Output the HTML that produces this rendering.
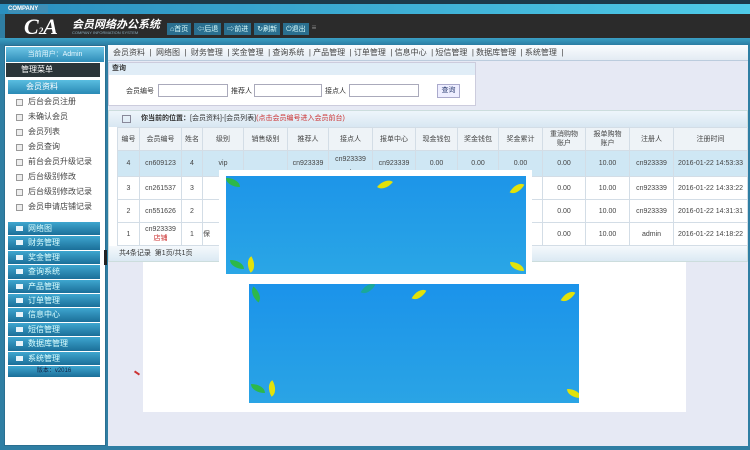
<!DOCTYPE html>
<html><head><meta charset="utf-8"><style>
*{margin:0;padding:0;box-sizing:border-box}
body{width:750px;height:450px;overflow:hidden;background:#2f7ea3;font-family:"Liberation Sans","Noto Sans CJK SC",sans-serif;font-size:8px;color:#333;position:relative}
.a{position:absolute}
table{border-collapse:collapse;table-layout:fixed}
td{border:1px solid #d3dde6;text-align:center;font-size:7px;color:#444;overflow:hidden;white-space:nowrap}
.lm div{height:15px;line-height:15px;padding-left:20px;color:#444;font-size:8px;position:relative}
.lm div:before{content:"";position:absolute;left:8px;top:5px;width:5px;height:5px;border:1px solid #999;background:#eee}
.bl div{height:13.4px;margin-bottom:1px;line-height:13px;padding-left:20px;color:#dff;font-size:8px;background:linear-gradient(#3ea6cf,#1b6f99);position:relative}
.bl div:before{content:"";position:absolute;left:8px;top:4px;width:7px;height:5px;background:#e8f4fa}
.leaf{position:absolute;width:14px;height:9px;border-radius:0 100% 0 100%}
</style></head><body>
<div class="a" style="left:0;top:0;width:750px;height:4px;background:#1c3a4a"></div>
<div class="a" style="left:0;top:4px;width:750px;height:10px;background:linear-gradient(90deg,#2a8fbf,#4fcbe8)"></div>
<div class="a" style="left:8px;top:5px;width:40px;height:8px;background:#3f8fb6;color:#fff;font-size:6px;line-height:8px;font-weight:bold">COMPANY</div>
<div class="a" style="left:5px;top:14px;width:745px;height:24px;background:#2b2b2b"></div>
<div class="a" style="left:24px;top:14px;font:italic bold 22px 'Liberation Serif',serif;color:#fff">C<span style="font-size:9px">2</span>A</div>
<div class="a" style="left:72px;top:16px;color:#fff;font-size:11px;font-weight:bold;font-style:italic">会员网络办公系统</div>
<div class="a" style="left:72px;top:30px;color:#8ab;font-size:4px">COMPANY INFORMATION SYSTEM</div>
<div class="a" style="left:167px;top:23px;display:flex;gap:3px">
<span style="background:#2a6f8f;color:#dff;font-size:7px;padding:1px 3px">⌂首页</span><span style="background:#2a6f8f;color:#dff;font-size:7px;padding:1px 3px">⇦后退</span><span style="background:#2a6f8f;color:#dff;font-size:7px;padding:1px 3px">⇨前进</span><span style="background:#2a6f8f;color:#dff;font-size:7px;padding:1px 3px">↻刷新</span><span style="background:#2a6f8f;color:#dff;font-size:7px;padding:1px 3px">⏻退出</span><span style="color:#888;font-size:8px">≡</span></div>
<div class="a" style="left:0;top:38px;width:750px;height:7px;background:linear-gradient(#3a9fc4,#2b7da3)"></div>
<!-- left -->
<div class="a" style="left:4px;top:45px;width:102px;height:401px;background:#fff;border:1px solid #2a6f91"></div>
<div class="a" style="left:6px;top:47px;width:98px;height:15px;background:linear-gradient(#6cc6e6,#2f8cb8);color:#e8f8ff;font-size:7px;line-height:15px;text-align:center">当前用户：Admin</div>
<div class="a" style="left:6px;top:63px;width:94px;height:14px;background:#2b3539;color:#fff;font-size:8px;line-height:14px;padding-left:15px">管理菜单</div>
<div class="a" style="left:8px;top:80px;width:92px;height:14px;background:linear-gradient(#59bde0,#2a8ab5);color:#fff;font-size:8px;line-height:14px;padding-left:18px">会员资料</div>
<div class="a lm" style="left:8px;top:94px;width:92px">
<div>后台会员注册</div><div>未确认会员</div><div>会员列表</div><div>会员查询</div><div>前台会员升级记录</div><div>后台级别修改</div><div>后台级别修改记录</div><div>会员申请店铺记录</div></div>
<div class="a bl" style="left:8px;top:222px;width:92px">
<div>网络图</div><div>财务管理</div><div>奖金管理</div><div>查询系统</div><div>产品管理</div><div>订单管理</div><div>信息中心</div><div>短信管理</div><div>数据库管理</div><div>系统管理</div></div>
<div class="a" style="left:8px;top:366px;width:92px;height:11px;background:linear-gradient(#3ea6cf,#1b6f99);color:#124;font-size:6px;text-align:center;line-height:11px">版本：v2016</div>
<div class="a" style="left:104px;top:250px;width:3px;height:15px;background:#222"></div>
<!-- right -->
<div class="a" style="left:108px;top:45px;width:640px;height:401px;background:#e6e9f4"></div>
<div class="a" style="left:108px;top:45px;width:640px;height:16px;background:linear-gradient(#fafcfe,#e3ebf3);border-bottom:1px solid #bcd;font-size:8px;line-height:16px;color:#444;padding-left:5px;word-spacing:0">会员资料 &nbsp;| &nbsp;网络图 &nbsp;| &nbsp;财务管理 &nbsp;| 奖金管理 &nbsp;| 查询系统 &nbsp;| 产品管理 &nbsp;| 订单管理 &nbsp;| 信息中心 &nbsp;| 短信管理 &nbsp;| 数据库管理 &nbsp;| 系统管理 &nbsp;|</div>
<div class="a" style="left:108px;top:62px;width:368px;height:44px;background:#fff;border:1px solid #ccd"></div>
<div class="a" style="left:109px;top:63px;width:366px;height:12px;background:#e0edf7;font-size:7px;font-weight:bold;padding-left:3px;line-height:12px">查询</div>
<div class="a" style="left:126px;top:86px;font-size:7px">会员编号</div>
<div class="a" style="left:158px;top:84px;width:70px;height:13px;border:1px solid #aab;background:#fff"></div>
<div class="a" style="left:231px;top:86px;font-size:7px">推荐人</div>
<div class="a" style="left:254px;top:84px;width:68px;height:13px;border:1px solid #aab;background:#fff"></div>
<div class="a" style="left:325px;top:86px;font-size:7px">接点人</div>
<div class="a" style="left:349px;top:84px;width:70px;height:13px;border:1px solid #aab;background:#fff"></div>
<div class="a" style="left:437px;top:84px;width:23px;height:14px;border:1px solid #aac;background:#eef;font-size:7px;text-align:center;line-height:12px;color:#347">查询</div>
<div class="a" style="left:108px;top:110px;width:640px;height:152px;background:#fff;border:1px solid #cdd"></div>
<div class="a" style="left:109px;top:111px;width:638px;height:16px;background:linear-gradient(#eef5fb,#d8e7f2);font-size:7px;line-height:16px;padding-left:32px"><b>你当前的位置：</b>[会员资料]-[会员列表]<span style="color:#c33">(点击会员编号进入会员前台)</span></div>
<div class="a" style="left:122px;top:115px;width:9px;height:8px;border:1px solid #889"></div>
<table class="a" style="left:117px;top:127px;width:631px">
<colgroup><col style="width:22px"><col style="width:42px"><col style="width:21px"><col style="width:41px"><col style="width:44px"><col style="width:41px"><col style="width:44px"><col style="width:43px"><col style="width:42px"><col style="width:41px"><col style="width:44px"><col style="width:43px"><col style="width:44px"><col style="width:44px"><col></colgroup>
<tr style="height:23px;background:#eef3f7"><td>编号</td><td>会员编号</td><td>姓名</td><td>级别</td><td>销售级别</td><td>推荐人</td><td>接点人</td><td>报单中心</td><td>现金钱包</td><td>奖金钱包</td><td>奖金累计</td><td style="white-space:normal;line-height:9px;padding:0 6px">重消购物账户</td><td style="white-space:normal;line-height:9px;padding:0 6px">报单购物账户</td><td>注册人</td><td>注册时间</td></tr>
<tr style="height:26px;background:#cfe7f4"><td>4</td><td>cn609123</td><td>4</td><td>vip</td><td></td><td>cn923339</td><td style="line-height:9px">cn923339<br>.</td><td>cn923339</td><td>0.00</td><td>0.00</td><td>0.00</td><td>0.00</td><td>10.00</td><td>cn923339</td><td>2016-01-22 14:53:33</td></tr>
<tr style="height:23px"><td>3</td><td>cn261537</td><td>3</td><td></td><td></td><td></td><td></td><td></td><td></td><td></td><td></td><td>0.00</td><td>10.00</td><td>cn923339</td><td>2016-01-22 14:33:22</td></tr>
<tr style="height:23px"><td>2</td><td>cn551626</td><td>2</td><td></td><td></td><td></td><td></td><td></td><td></td><td></td><td></td><td>0.00</td><td>10.00</td><td>cn923339</td><td>2016-01-22 14:31:31</td></tr>
<tr style="height:23px"><td>1</td><td style="line-height:9px">cn923339<br><span style="color:#c33">店铺</span></td><td>1</td><td style="text-align:left">保</td><td></td><td></td><td></td><td></td><td></td><td></td><td></td><td>0.00</td><td>10.00</td><td>admin</td><td>2016-01-22 14:18:22</td></tr>
</table>
<div class="a" style="left:109px;top:246px;width:638px;height:15px;background:linear-gradient(#f5f9fc,#dbe9f3);font-size:7px;line-height:15px;padding-left:10px">共4条记录 &nbsp;第1页/共1页</div>
<!-- overlays -->
<div class="a" style="left:143px;top:262px;width:543px;height:150px;background:#fff"></div>
<div class="a" style="left:219px;top:170px;width:313px;height:106px;background:#fff"></div>
<div class="a" style="left:226px;top:176px;width:300px;height:98px;background:linear-gradient(#1d95e8,#2aa6e6);overflow:hidden">
<div class="leaf" style="left:0;top:2px;background:#2db84a"></div><div class="leaf" style="left:152px;top:4px;background:#e2e20a;transform:rotate(-50deg)"></div><div class="leaf" style="left:284px;top:8px;background:#e2e20a;transform:rotate(-60deg)"></div><div class="leaf" style="left:4px;top:84px;background:#2db84a"></div><div class="leaf" style="left:18px;top:84px;background:#e2e20a;transform:rotate(60deg)"></div><div class="leaf" style="left:284px;top:86px;background:#e2e20a"></div></div>
<div class="a" style="left:249px;top:284px;width:330px;height:119px;background:linear-gradient(#1b93ea,#2aa4e5);overflow:hidden">
<div class="leaf" style="left:0;top:6px;background:#2db84a;transform:rotate(40deg)"></div><div class="leaf" style="left:112px;top:0;background:#1aa89a;transform:rotate(-60deg)"></div><div class="leaf" style="left:163px;top:6px;background:#e2e20a;transform:rotate(-60deg)"></div><div class="leaf" style="left:312px;top:8px;background:#e2e20a;transform:rotate(-60deg)"></div><div class="leaf" style="left:2px;top:100px;background:#2db84a"></div><div class="leaf" style="left:16px;top:100px;background:#e2e20a;transform:rotate(60deg)"></div><div class="leaf" style="left:318px;top:105px;background:#e2e20a"></div></div>
<div class="a" style="left:134px;top:372px;width:6px;height:2px;background:#c33;transform:rotate(35deg)"></div>
</body></html>
